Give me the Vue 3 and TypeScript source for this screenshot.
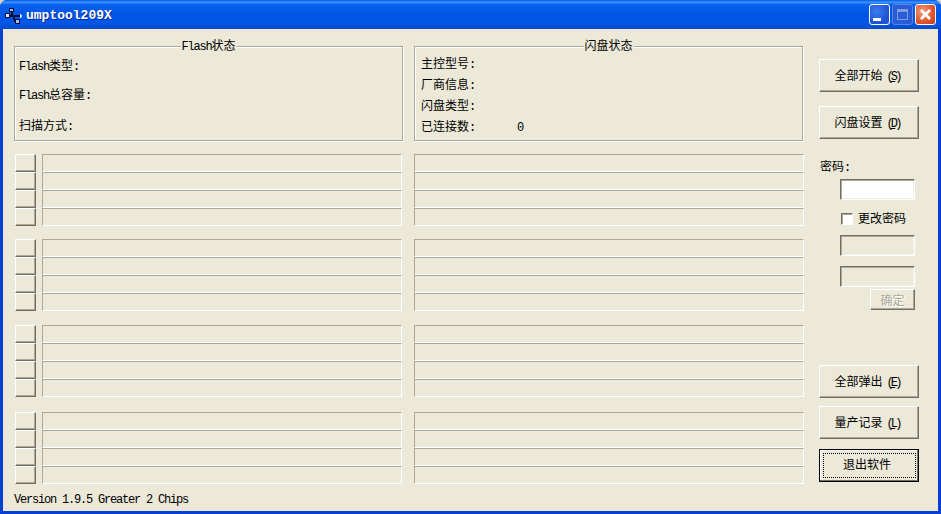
<script setup lang="ts">
interface Part { t: string; lat: boolean }
function parts(text: string): Part[] {
  return (text.match(/[\x20-\x7e]+|[^\x20-\x7e]+/g) ?? []).map((t) => ({
    t,
    lat: /^[\x20-\x7e]/.test(t),
  }))
}
const flashRows = [
  { label: 'Flash类型:', cls: 'r1' },
  { label: 'Flash总容量:', cls: 'r2' },
  { label: '扫描方式:', cls: 'r3' },
]
const diskRows = [
  { label: '主控型号:', value: '' },
  { label: '厂商信息:', value: '' },
  { label: '闪盘类型:', value: '' },
  { label: '已连接数:', value: '0' },
]
const banks = [0, 1, 2, 3]
const rows = [0, 1, 2, 3]
</script>

<template>
  <div class="window">
    <header class="titlebar">
      <svg class="usb" width="18" height="18" viewBox="0 0 18 18" shape-rendering="crispEdges">
        <path d="M1 6h5v5H1zM6 8h10v2H6z" fill="#00103c" />
        <path d="M2 7h3v3H2z" fill="#dfe8fa" />
        <path d="M7 3h2v5H7zM9 10h2v3H9zM10 13h2v2h-2z" fill="#00103c" />
        <path d="M5 1h5v4H5zM11 12h5v5h-5z" fill="#00103c" />
        <path d="M6 2h3v2H6zM12 13h3v3h-3z" fill="#a9bde6" />
        <path d="M16 7h1v1h1v2h-1v1h-1z" fill="#dfe8fa" />
      </svg>
      <span class="title">umptool209X</span>
      <div class="controls">
        <button class="ctl min"><i></i></button>
        <button class="ctl max"><i></i></button>
        <button class="ctl close">
          <svg width="15" height="15" viewBox="0 0 15 15"><path d="M3 3l9 9M12 3l-9 9" stroke="#fff" stroke-width="2.8" fill="none" /></svg>
        </button>
      </div>
    </header>

    <div class="client">
      <main class="left">
        <div class="status">
          <section class="group flash">
            <span class="legend"><span class="lat">Flash</span>状态</span>
            <div v-for="r in flashRows" :key="r.label" class="line" :class="r.cls">
              <span v-for="(p, i) in parts(r.label)" :key="i" :class="{ lat: p.lat }">{{ p.t }}</span>
            </div>
          </section>
          <section class="group disk">
            <span class="legend">闪盘状态</span>
            <div v-for="r in diskRows" :key="r.label" class="line dline">
              <span class="dlabel">
                <span v-for="(p, i) in parts(r.label)" :key="i" :class="{ lat: p.lat }">{{ p.t }}</span>
              </span>
              <span class="dvalue lat">{{ r.value }}</span>
            </div>
          </section>
        </div>

        <div class="banks">
          <div v-for="b in banks" :key="b" class="bank">
            <div v-for="r in rows" :key="r" class="row">
              <button class="port"></button>
              <div class="field wide"></div>
              <div class="field wider"></div>
            </div>
          </div>
        </div>

        <footer class="version lat">Version 1.9.5 Greater 2 Chips</footer>
      </main>

      <aside class="side">
        <button class="btn first"><span>全部开始<span class="key">(<u>S</u>)</span></span></button>
        <button class="btn second"><span>闪盘设置<span class="key">(<u>D</u>)</span></span></button>
        <div class="pwd-label">密码<span class="lat">:</span></div>
        <input class="sunken pwd" type="text" />
        <label class="check"><span class="box"></span><span class="check-text">更改密码</span></label>
        <div class="sunken off one"></div>
        <div class="sunken off two"></div>
        <button class="btn ok" disabled>确定</button>
        <button class="btn eject"><span>全部弹出<span class="key">(<u>E</u>)</span></span></button>
        <button class="btn log"><span>量产记录<span class="key">(<u>L</u>)</span></span></button>
        <button class="btn quit"><span class="focus">退出软件</span></button>
      </aside>
    </div>
  </div>
</template>

<style>
html, body { margin: 0; padding: 0; background: #d8d4c8; overflow: hidden; }
</style>

<style scoped>
.window {
  width: 941px;
  height: 514px;
  display: flex;
  flex-direction: column;
  box-sizing: border-box;
  background: #0a3fd6;
  border-radius: 7px 7px 0 0;
  overflow: hidden;
  font: 12px "Liberation Mono", "Noto Sans CJK SC", monospace;
  color: #000;
}
.lat { letter-spacing: -1.2px; white-space: pre; }
.key { margin-left: 4px; letter-spacing: -2.8px; padding-right: 2px; }
.titlebar {
  height: 29px;
  flex: none;
  display: flex;
  align-items: center;
  box-sizing: border-box;
  padding: 0 5px 0 4px;
  background: linear-gradient(180deg, #0a5ae6 0%, #3d95ff 8%, #0a60ee 16%, #0055e5 50%, #0056e8 82%, #0a49c8 100%);
}
.usb { flex: none; margin: 3px 4px 0 0; }
.title {
  font: bold 13px "Liberation Mono", monospace;
  color: #fff;
  text-shadow: 1px 1px 0 #0a2a90;
  margin-top: 2px;
}
.controls { margin-left: auto; display: flex; gap: 2px; }
.ctl {
  width: 21px;
  height: 21px;
  padding: 0;
  box-sizing: border-box;
  border: 1px solid #fff;
  border-radius: 3px;
  display: flex;
  align-items: center;
  justify-content: center;
  background: radial-gradient(circle at 35% 35%, #3c7cf0, #1a4fd0 75%, #2a5ae0);
}
.min i { width: 8px; height: 3px; background: #fff; margin: 9px 5px 0 0; }
.max { background: #2a5cd8; border-color: #5c84e0; }
.max i { width: 11px; height: 11px; box-sizing: border-box; border: 1px solid #7e9ce4; border-top-width: 3px; }
.close { background: radial-gradient(circle at 35% 35%, #f0a080, #e0542c 60%, #c03a14); }

.client {
  flex: 1;
  display: flex;
  margin: 0 3px 3px;
  box-sizing: border-box;
  padding: 17px 0 0 11px;
  background: #ece9d8;
  min-height: 0;
}
.left { width: 790px; flex: none; display: flex; flex-direction: column; }
.status { display: flex; gap: 11px; }
.group {
  position: relative;
  width: 389px;
  height: 95px;
  box-sizing: border-box;
  border: 1px solid #aca899;
  box-shadow: inset 1px 1px 0 #fff, 1px 1px 0 #fff;
}
.legend {
  position: absolute;
  top: -7px;
  left: 50%;
  transform: translateX(-50%);
  background: #ece9d8;
  padding: 0 1px;
  line-height: 14px;
  white-space: nowrap;
}
.line { line-height: 14px; white-space: nowrap; }
.flash { padding: 13px 0 0 4px; }
.r2 { margin-top: 15px; }
.r3 { margin-top: 17px; }
.disk { padding: 11px 0 0 6px; }
.dline { display: flex; height: 21px; }
.dlabel { width: 96px; }

.banks { margin-top: 13px; display: flex; flex-direction: column; }
.bank + .bank { margin-top: 13px; }
.bank:nth-child(3) { margin-top: 14px; }
.bank:nth-child(4) { margin-top: 15px; }
.row { display: flex; height: 18px; padding-left: 1px; }
.port {
  width: 21px;
  height: 18px;
  padding: 0;
  box-sizing: border-box;
  background: #ece9d8;
  border: 1px solid;
  border-color: #fff #716f64 #716f64 #fff;
  box-shadow: inset -1px -1px 0 #aca899;
}
.field {
  height: 18px;
  box-sizing: border-box;
  border: 1px solid;
  border-color: #aca899 #fff #fff #aca899;
}
.wide { width: 360px; margin-left: 6px; }
.wider { width: 390px; margin-left: 12px; }
.version {
  margin-top: 9px;
  line-height: 14px;
}

.side { width: 119px; flex: none; margin-left: 15px; display: flex; flex-direction: column; align-items: flex-start; padding-bottom: 29px; box-sizing: border-box; }
.btn {
  width: 100px;
  height: 33px;
  flex: none;
  padding: 0 2px 2px 0;
  box-sizing: border-box;
  background: #ece9d8;
  border: 1px solid;
  border-color: #fff #716f64 #716f64 #fff;
  box-shadow: inset -1px -1px 0 #aca899;
  font: 12px "Liberation Mono", "Noto Sans CJK SC", monospace;
  color: #000;
  display: flex;
  align-items: center;
  justify-content: center;
}
.first { margin-top: 13px; }
.second { margin-top: 14px; }
.pwd-label { margin: 22px 0 0 1px; line-height: 14px; }
.sunken {
  width: 75px;
  height: 21px;
  flex: none;
  box-sizing: border-box;
  margin-left: 21px;
  border: 1px solid;
  border-color: #716f64 #fff #fff #716f64;
  box-shadow: inset 1px 1px 0 #aca899, inset -1px -1px 0 #f1efe2;
  background: #ece9d8;
}
.pwd { margin-top: 4px; background: #fff; padding: 0; outline: none; }
.check { display: flex; align-items: center; margin: 12px 0 0 22px; height: 14px; }
.check-text { padding-bottom: 2px; }
.box {
  width: 12px;
  height: 12px;
  margin-right: 5px;
  box-sizing: border-box;
  background: #fff;
  border: 1px solid;
  border-color: #716f64 #fff #fff #716f64;
  box-shadow: inset 1px 1px 0 #aca899;
}
.one { margin-top: 9px; }
.two { margin-top: 10px; }
.ok {
  width: 45px;
  height: 21px;
  margin: 2px 0 0 51px;
  padding: 0;
  color: #aca899;
  text-shadow: 1px 1px 0 #fff;
}
.eject { margin-top: auto; }
.log { margin-top: 8px; }
.quit { margin-top: 10px; padding: 0; border: 1px solid #000; box-shadow: inset -1px -1px 0 #716f64, inset 1px 1px 0 #fff; }
.focus {
  display: flex;
  align-items: center;
  justify-content: center;
  width: 93px;
  height: 25px;
  box-sizing: border-box;
  border: 1px dotted #000;
  padding: 0 4px 3px 0;
}
</style>
